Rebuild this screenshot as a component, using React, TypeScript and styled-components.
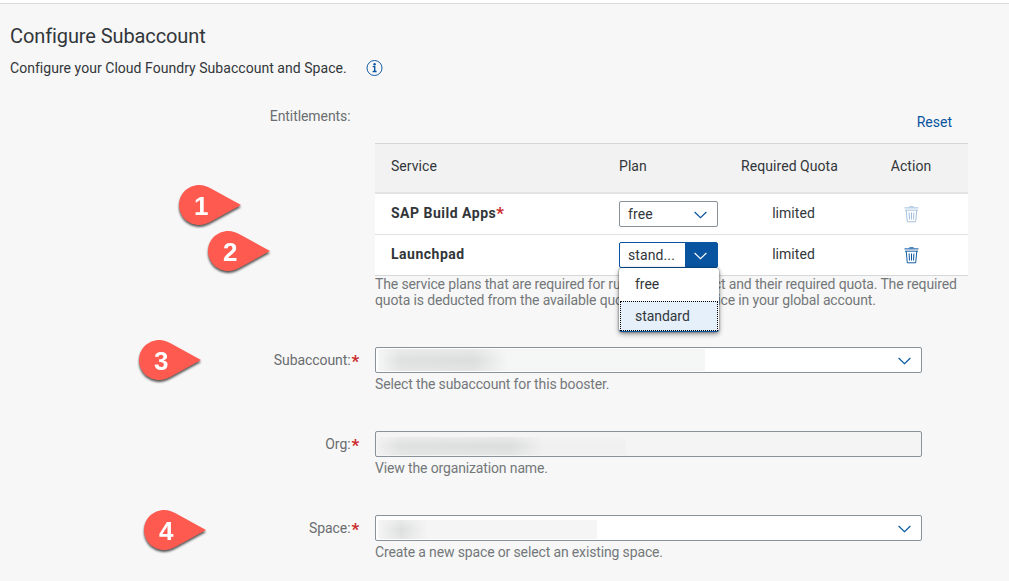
import React from "react";
import styled, { createGlobalStyle } from "styled-components";

const GlobalStyle = createGlobalStyle`
  * { box-sizing: border-box; }
  body {
    margin: 0;
    background: #f7f7f7;
    font-family: Roboto, "Liberation Sans", sans-serif;
    font-size: 14px;
    color: #32363a;
    overflow: hidden;
  }
`;

const Page = styled.main`
  position: relative;
  width: 1009px;
  height: 581px;
  overflow: hidden;
  background: #f7f7f7;
`;

const TopEdge = styled.div`
  height: 4px;
  background: #fff;
  border-bottom: 1px solid #d9d9d9;
`;

const Header = styled.header`
  height: 96px;
  padding: 20px 10px 0;
`;

const Title = styled.h1`
  margin: 0;
  font-size: 20px;
  line-height: 24px;
  font-weight: 400;
  letter-spacing: -0.1px;
`;

const Intro = styled.p`
  display: flex;
  align-items: center;
  gap: 19px;
  margin: 11px 0 0;
  height: 18px;
  line-height: 18px;
  letter-spacing: 0.04px;
`;

const FormRow = styled.section<{ $height: number }>`
  display: grid;
  grid-template-columns: 360px 593px;
  column-gap: 15px;
  height: ${(p) => p.$height}px;
`;

const Label = styled.label<{ $top: number }>`
  display: flex;
  justify-content: flex-end;
  padding-top: ${(p) => p.$top}px;
  line-height: 18px;
  letter-spacing: -0.08px;
  color: #6a6d70;
`;

const Star = styled.span<{ $slot?: boolean }>`
  width: ${(p) => (p.$slot ? "9.5px" : "auto")};
  margin-left: ${(p) => (p.$slot ? 0 : -1)}px;
  padding-left: 1px;
  font-size: 17px;
  font-weight: 700;
  line-height: 21px;
  letter-spacing: 0;
  color: #cc2a2a;
`;

const Toolbar = styled.div`
  display: flex;
  justify-content: flex-end;
  height: 43px;
  padding: 13px 16px 0 0;
`;

const ResetLink = styled.a`
  color: #0854a0;
  line-height: 18px;
`;

const Table = styled.div`
  border-top: 1px solid #d5d7d8;
`;

const TableRow = styled.div<{ $head?: boolean }>`
  display: grid;
  grid-template-columns: 244px 112px 117px 120px;
  height: ${(p) => (p.$head ? 50 : 41)}px;
  background: ${(p) => (p.$head ? "#f2f2f2" : "#fff")};
  border-bottom: ${(p) => (p.$head ? "2px solid #e4e4e4" : "1px solid #e1e1e1")};
  &:last-child { border-bottom-color: #d5d7d8; }
`;

const Cell = styled.div<{ $center?: boolean; $bold?: boolean; $shift?: number; $lift?: number }>`
  display: flex;
  align-items: center;
  justify-content: ${(p) => (p.$center ? "center" : "flex-start")};
  padding-left: ${(p) => p.$shift ?? 0}px;
  padding-bottom: ${(p) => p.$lift ?? 2}px;
  font-weight: ${(p) => (p.$bold ? 700 : 400)};
  letter-spacing: ${(p) => (p.$bold ? 0.5 : 0.05)}px;
  white-space: nowrap;
`;

const SelectCell = styled.div`
  position: relative;
  padding-top: 7px;
`;

const Select = styled.div<{ $open?: boolean }>`
  display: flex;
  width: 99px;
  height: 26px;
  border: 1px solid ${(p) => (p.$open ? "#0854a0" : "#89919a")};
  border-radius: 2px;
  background: #fff;
  color: #32363a;
`;

const SelectValue = styled.span`
  flex: 1;
  padding-left: 8px;
  line-height: 25px;
  letter-spacing: 0.1px;
`;

const SelectArrow = styled.span<{ $open?: boolean }>`
  display: flex;
  align-items: center;
  justify-content: center;
  width: 32px;
  padding: 1px 1px 0 0;
  background: ${(p) => (p.$open ? "#0854a0" : "transparent")};
  color: ${(p) => (p.$open ? "#fff" : "#0854a0")};
`;

const Menu = styled.div`
  position: absolute;
  z-index: 2;
  top: 33px;
  left: 0;
  width: 100px;
  height: 64px;
  background: #fff;
  border-radius: 3px;
  border-bottom: 1px solid #0854a0;
  box-shadow: 0 0 2px rgba(0, 0, 0, 0.6), 0 2px 5px rgba(0, 0, 0, 0.45);
`;

const MenuItem = styled.div<{ $selected?: boolean }>`
  height: ${(p) => (p.$selected ? 30 : 33)}px;
  margin: 0 ${(p) => (p.$selected ? 1 : 0)}px;
  padding-left: ${(p) => (p.$selected ? 14 : 16)}px;
  line-height: ${(p) => (p.$selected ? 28 : 33)}px;
  background: ${(p) => (p.$selected ? "#e5f0fa" : "transparent")};
  border: ${(p) => (p.$selected ? "1px dotted #000" : "0")};
  letter-spacing: -0.05px;
`;

const Help = styled.p`
  margin: 0;
  line-height: 16px;
  letter-spacing: -0.14px;
  color: #74777a;
  white-space: nowrap;
`;

const Field = styled.div<{ $readOnly?: boolean }>`
  display: flex;
  align-items: center;
  justify-content: space-between;
  width: 547px;
  height: 26px;
  margin-bottom: 3px;
  padding: 0 10px 0 2px;
  border: 1px solid #89919a;
  border-radius: 2px;
  background: ${(p) => (p.$readOnly ? "#f4f4f4" : "#fff")};
  color: #0854a0;
  svg { margin-top: 2px; }
`;

const Redacted = styled.span<{ $width: number; $dark: number; $height: number; $tone: string }>`
  align-self: flex-end;
  margin-bottom: 1px;
  width: ${(p) => p.$width}px;
  height: ${(p) => p.$height}px;
  background:
    linear-gradient(180deg, rgba(245, 245, 245, 0.5), rgba(245, 245, 245, 0) 50%, rgba(245, 245, 245, 0.3)),
    linear-gradient(90deg, ${(p) => p.$tone} 0, #dfe0e0 22px, #dcdddd ${(p) => p.$dark - 20}px, ${(p) => p.$tone} ${(p) => p.$dark + 14}px);
`;

const Pin = styled.svg<{ $x: number; $y: number }>`
  position: absolute;
  left: ${(p) => p.$x}px;
  top: ${(p) => p.$y}px;
  overflow: visible;
  filter: drop-shadow(0 2px 1.2px rgba(0, 0, 0, 0.65));
  text {
    font: 700 26px "Liberation Sans", sans-serif;
    fill: #fff;
    text-anchor: middle;
  }
`;

const Chevron = () => (
  <svg width="13" height="8" viewBox="0 0 13 8" fill="none" stroke="currentColor" strokeWidth="1.15">
    <path d="M.6 1 6.5 6.7 12.4 1" />
  </svg>
);

const InfoIcon = () => (
  <svg width="17" height="16" viewBox="0 0 17 16" fill="none" stroke="#0854a0">
    <circle cx="8.5" cy="8" r="7.5" strokeWidth="0.95" />
    <path d="M6.7 6.6h2v4.800M6.600 11.500h4" strokeWidth="1.4" />
    <circle cx="8.6" cy="4.3" r="1.2" fill="#0854a0" stroke="none" />
  </svg>
);

const TrashIcon = ({ disabled }: { disabled?: boolean }) => (
  <svg width="15" height="17" viewBox="0 0 15 17" fill="none" stroke="#0854a0" opacity={disabled ? 0.38 : 1}>
    <path d="M5.3 .8h4.4" strokeWidth="1" />
    <path d="M.5 1.900h14" />
    <path d="M1 4.2h13M2.2 4.2l1.1 11.600h8.4l1.1-11.600" strokeWidth="0.95" />
    <path d="M5.1 6.500l.4 7M7.5 6.500v7M9.9 6.500l-.4 7" />
  </svg>
);

const Callout = ({ x, y, n }: { x: number; y: number; n: number }) => (
  <Pin $x={x} $y={y} width="62" height="40" viewBox="0 0 62 40">
    <path d="M20.5 0C9 0 0 8.900 0 20s9 20 20.500 20c4 0 7.500-1.300 11-3.200L62 20 31.500 3.200C28 1.300 24.500 0 20.500 0Z" fill="#ff5a4f" />
    <text x="22.3" y="29.500">{n}</text>
  </Pin>
);

export default function App() {
  return (
    <Page>
      <GlobalStyle />
      <TopEdge />
      <Header>
        <Title>Configure Subaccount</Title>
        <Intro>
          Configure your Cloud Foundry Subaccount and Space.
          <InfoIcon />
        </Intro>
      </Header>

      <FormRow $height={247}>
        <Label $top={7}>
          Entitlements:
          <Star $slot />
        </Label>
        <div>
          <Toolbar>
            <ResetLink>Reset</ResetLink>
          </Toolbar>
          <Table>
            <TableRow $head>
              <Cell $shift={16} $lift={4}>Service</Cell>
              <Cell $lift={4}>Plan</Cell>
              <Cell $center $lift={4}>Required Quota</Cell>
              <Cell $center $shift={6} $lift={4}>Action</Cell>
            </TableRow>
            <TableRow>
              <Cell $shift={16} $bold>SAP Build Apps<Star>*</Star></Cell>
              <SelectCell>
                <Select>
                  <SelectValue>free</SelectValue>
                  <SelectArrow><Chevron /></SelectArrow>
                </Select>
              </SelectCell>
              <Cell $center $shift={8}>limited</Cell>
              <Cell $center $shift={6} $lift={0}><TrashIcon disabled /></Cell>
            </TableRow>
            <TableRow>
              <Cell $shift={16} $bold>Launchpad</Cell>
              <SelectCell>
                <Select $open>
                  <SelectValue>stand...</SelectValue>
                  <SelectArrow $open><Chevron /></SelectArrow>
                </Select>
                <Menu>
                  <MenuItem>free</MenuItem>
                  <MenuItem $selected>standard</MenuItem>
                </Menu>
              </SelectCell>
              <Cell $center $shift={8}>limited</Cell>
              <Cell $center $shift={6} $lift={0}><TrashIcon /></Cell>
            </TableRow>
          </Table>
          <Help>
            The service plans that are required for running this project and their required quota. The required
            <br />
            quota is deducted from the available quota for each service in your global account.
          </Help>
        </div>
      </FormRow>

      <FormRow $height={84}>
        <Label $top={4}>Subaccount:<Star $slot>*</Star></Label>
        <div>
          <Field>
            <Redacted $width={327} $height={22} $dark={116} $tone="#f5f6f6" />
            <Chevron />
          </Field>
          <Help>Select the subaccount for this booster.</Help>
        </div>
      </FormRow>

      <FormRow $height={84}>
        <Label $top={4}>Org:<Star $slot>*</Star></Label>
        <div>
          <Field $readOnly>
            <Redacted $width={248} $height={18} $dark={152} $tone="#f0f0f0" />
          </Field>
          <Help>View the organization name.</Help>
        </div>
      </FormRow>

      <FormRow $height={66}>
        <Label $top={4}>Space:<Star $slot>*</Star></Label>
        <div>
          <Field>
            <Redacted $width={219} $height={19} $dark={36} $tone="#f5f5f5" />
            <Chevron />
          </Field>
          <Help>Create a new space or select an existing space.</Help>
        </div>
      </FormRow>

      <Callout x={179} y={185} n={1} />
      <Callout x={208} y={231} n={2} />
      <Callout x={139} y={339.5} n={3} />
      <Callout x={144} y={510} n={4} />
    </Page>
  );
}
